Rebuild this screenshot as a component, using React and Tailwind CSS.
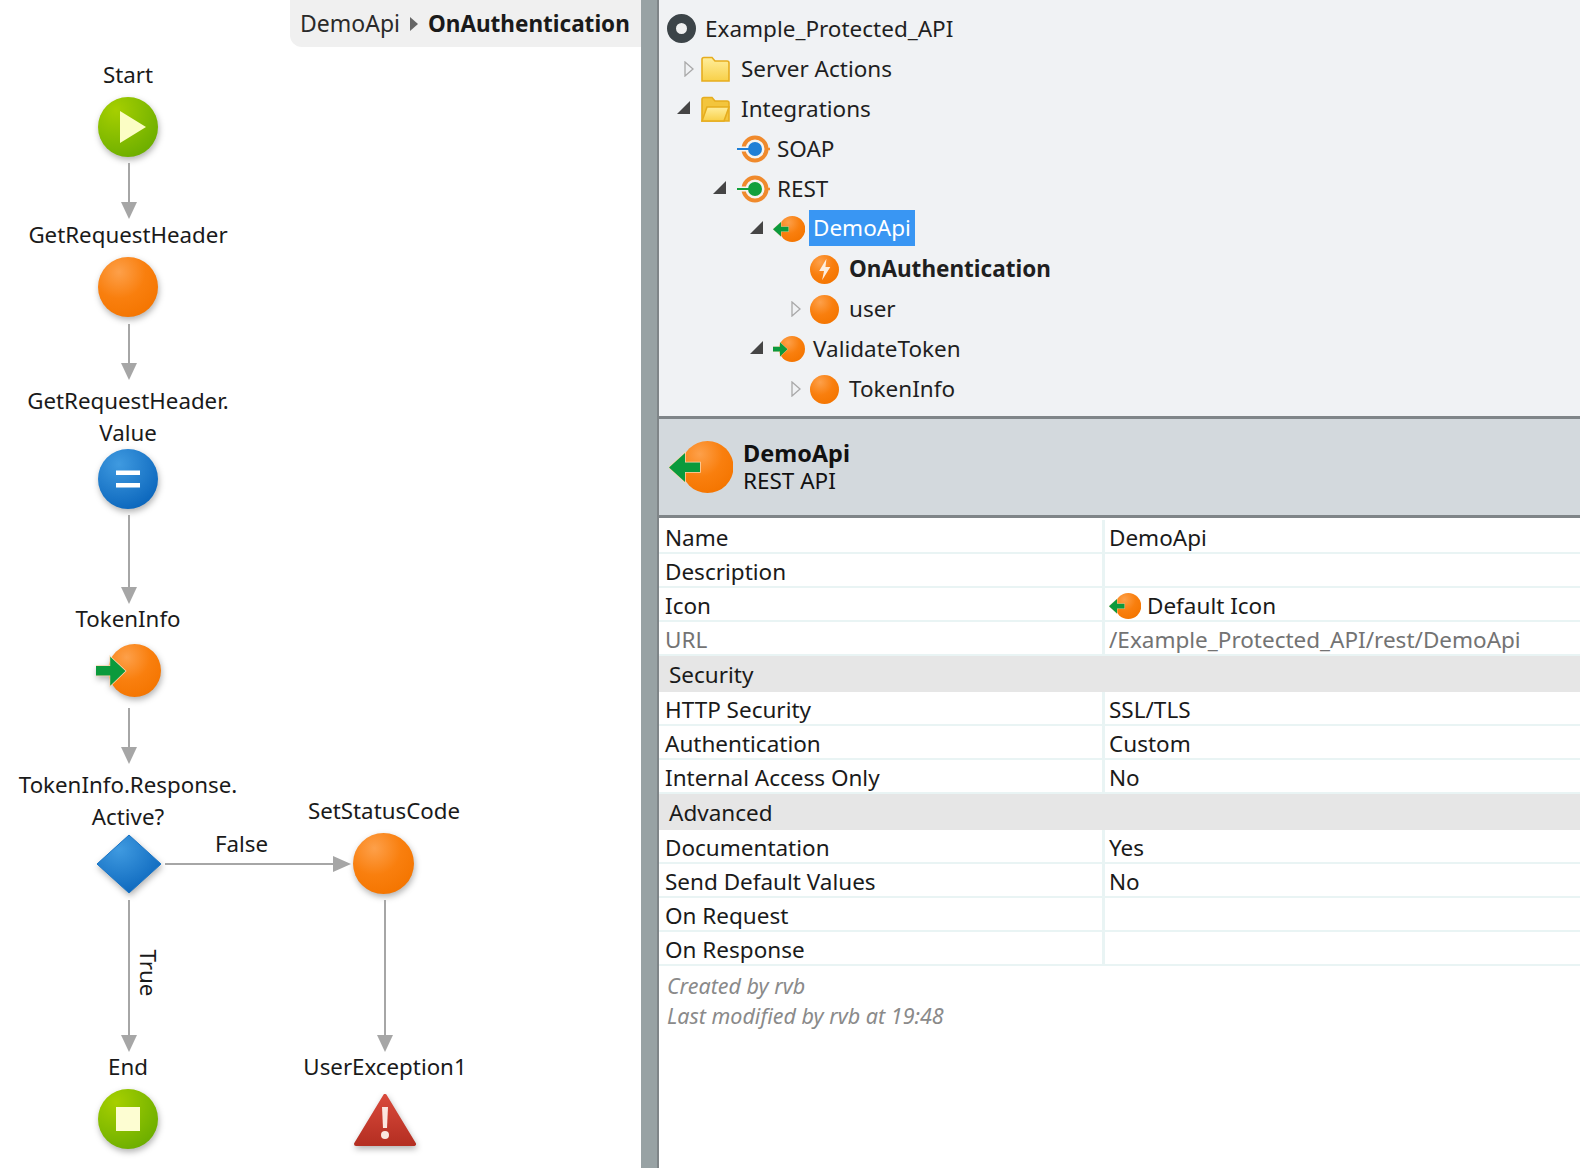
const font = "font-['Noto_Sans','Open_Sans',sans-serif]";

function Gradients() {
  return (
    <svg className="absolute h-0 w-0">
      <defs>
        <radialGradient id="orange" cx="35%" cy="25%" r="80%">
          <stop offset="0%" stopColor="#fda04a" />
          <stop offset="55%" stopColor="#f97f0e" />
          <stop offset="100%" stopColor="#f47500" />
        </radialGradient>
        <radialGradient id="green" cx="30%" cy="22%" r="85%">
          <stop offset="0%" stopColor="#a6cf00" />
          <stop offset="100%" stopColor="#6cae00" />
        </radialGradient>
        <radialGradient id="blue" cx="35%" cy="25%" r="85%">
          <stop offset="0%" stopColor="#3f9ae0" />
          <stop offset="100%" stopColor="#0863ba" />
        </radialGradient>
        <linearGradient id="folder" x1="0" y1="0" x2="0" y2="1">
          <stop offset="0%" stopColor="#ffee9c" />
          <stop offset="100%" stopColor="#f8d048" />
        </linearGradient>
        <linearGradient id="warn" x1="0" y1="0" x2="0" y2="1">
          <stop offset="0%" stopColor="#d8493a" />
          <stop offset="100%" stopColor="#b52f22" />
        </linearGradient>
      </defs>
    </svg>
  );
}

const shadow = "drop-shadow-[1px_3px_3px_rgba(0,0,0,0.3)]";

function Ball({ size = 60, className = "", children }) {
  return (
    <svg width={size} height={size} viewBox="0 0 60 60" className={className}>
      <circle cx="30" cy="30" r="30" fill="url(#orange)" />
      {children}
    </svg>
  );
}

function ApiIcon({ dir, width, height, className = "" }) {
  return (
    <svg width={width} height={height} viewBox="0 0 64 52" className={className}>
      <circle cx={dir === "in" ? 38 : 38.5} cy="26" r="26" fill="url(#orange)" />
      {dir === "in" ? (
        <path
          d="M0 21.5H14V12.5L29 26.5L14 41V31H0Z"
          fill="#0b9a3c"
          stroke="#fbd7b0"
          strokeWidth="1.5"
          paintOrder="stroke"
        />
      ) : (
        <path
          d="M0 26.5L16 12V21.5H31V31H16V41Z"
          fill="#0b9a3c"
          stroke="#fbd7b0"
          strokeWidth="1.5"
          paintOrder="stroke"
        />
      )}
    </svg>
  );
}

function ServiceIcon({ color }) {
  return (
    <svg width="33" height="28" viewBox="0 0 33 28">
      <circle cx="18" cy="14" r="11.5" fill="#f4f4f2" stroke="#f08a2c" strokeWidth="4" />
      <path d="M31 14H33" stroke="#f08a2c" strokeWidth="2.5" />
      <rect x="0" y="11.5" width="12" height="5" fill="#f4f4f2" />
      <path d="M0 14H12" stroke={color} strokeWidth="2" />
      <circle cx="18" cy="14" r="7" fill={color} />
    </svg>
  );
}

function Folder({ open }) {
  return (
    <svg width="29" height="27" viewBox="0 0 29 27">
      <path
        d="M1 25V3.5Q1 1.5 3 1.5H11L14 5H26Q28 5 28 7V25Z"
        fill={open ? "#f3c53d" : "url(#folder)"}
        stroke="#e6ad1e"
        strokeWidth="1.6"
      />
      {open && (
        <path
          d="M1 25L6 11H28L23 25Z"
          fill="url(#folder)"
          stroke="#e6ad1e"
          strokeWidth="1.6"
        />
      )}
    </svg>
  );
}

function Expander({ open }) {
  return open ? (
    <svg width="13" height="13" viewBox="0 0 13 13" className="mb-[4px]">
      <path d="M13 0V13H0Z" fill="#454545" />
    </svg>
  ) : (
    <svg width="10" height="16" viewBox="0 0 10 16">
      <path d="M1 1L9 8L1 15Z" fill="#f0f2f4" stroke="#a9a9a9" strokeWidth="1.3" />
    </svg>
  );
}

function DownArrow({ height, className }) {
  return (
    <svg width="18" height={height} className={`absolute ${className}`}>
      <path d={`M9 0V${height - 14}`} stroke="#a6a6a6" strokeWidth="2" />
      <path d={`M1 ${height - 17}H17L9 ${height}Z`} fill="#a6a6a6" />
    </svg>
  );
}

function FlowLabel({ children, className }) {
  return (
    <div className={`absolute w-[270px] text-center text-[22.3px] leading-8 text-[#1a1a1a] ${className}`}>
      {children}
    </div>
  );
}

function Flow() {
  return (
    <div className="relative h-full w-[641px] shrink-0 bg-white">
      <div className="absolute right-0 top-0 flex h-[47px] w-[351px] items-center rounded-bl-xl bg-[#f0f0f0] pl-[10px]">
        <span className="text-[23px] text-[#2a2a2a]">DemoApi</span>
        <svg width="8" height="14" viewBox="0 0 8 14" className="ml-[10px] mr-[10px]">
          <path d="M0 0L8 7L0 14Z" fill="#666" />
        </svg>
        <span className="text-[22.5px] font-bold text-[#1a1a1a]">OnAuthentication</span>
      </div>

      <FlowLabel className="left-[-7px] top-[59px]">Start</FlowLabel>
      <svg width="60" height="60" viewBox="0 0 60 60" className={`absolute left-[98px] top-[97px] ${shadow}`}>
        <circle cx="30" cy="30" r="30" fill="url(#green)" />
        <path d="M22 14L48 30L22 46Z" fill="#fbfdc4" />
      </svg>
      <DownArrow height={56} className="left-[120px] top-[163px]" />

      <FlowLabel className="left-[-7px] top-[219px]">GetRequestHeader</FlowLabel>
      <Ball className={`absolute left-[98px] top-[257px] ${shadow}`} />
      <DownArrow height={56} className="left-[120px] top-[324px]" />

      <FlowLabel className="left-[-7px] top-[385px]">
        GetRequestHeader.
        <br />
        Value
      </FlowLabel>
      <svg width="60" height="60" viewBox="0 0 60 60" className={`absolute left-[98px] top-[449px] ${shadow}`}>
        <circle cx="30" cy="30" r="30" fill="url(#blue)" />
        <path d="M18 21.5H42V26H18ZM18 34H42V38.5H18Z" fill="#fff" />
      </svg>
      <DownArrow height={89} className="left-[120px] top-[515px]" />

      <FlowLabel className="left-[-7px] top-[603px]">TokenInfo</FlowLabel>
      <ApiIcon dir="in" width={65} height={53} className={`absolute left-[96px] top-[644px] ${shadow}`} />
      <DownArrow height={56} className="left-[120px] top-[708px]" />

      <FlowLabel className="left-[-7px] top-[769px]">
        TokenInfo.Response.
        <br />
        Active?
      </FlowLabel>
      <svg width="66" height="60" viewBox="0 0 66 60" className={`absolute left-[96px] top-[834px] ${shadow}`}>
        <path d="M33 1L65 30L33 59L1 30Z" fill="url(#blue)" stroke="#1673c6" strokeLinejoin="round" />
      </svg>

      <div className="absolute left-[215px] top-[828px] text-[22.3px] leading-8 text-[#1a1a1a]">False</div>
      <svg width="186" height="18" className="absolute left-[165px] top-[855px]">
        <path d="M0 9H170" stroke="#a6a6a6" strokeWidth="2" />
        <path d="M168 1V17L186 9Z" fill="#a6a6a6" />
      </svg>

      <FlowLabel className="left-[249px] top-[795px]">SetStatusCode</FlowLabel>
      <Ball size={61} className={`absolute left-[353px] top-[833px] ${shadow}`} />

      <DownArrow height={152} className="left-[120px] top-[900px]" />
      <DownArrow height={152} className="left-[376px] top-[900px]" />
      <div className="absolute left-[123px] top-[957px] w-[50px] rotate-90 text-center text-[22.3px] leading-8 text-[#1a1a1a]">
        True
      </div>

      <FlowLabel className="left-[-7px] top-[1051px]">End</FlowLabel>
      <svg width="60" height="60" viewBox="0 0 60 60" className={`absolute left-[98px] top-[1089px] ${shadow}`}>
        <circle cx="30" cy="30" r="30" fill="url(#green)" />
        <path d="M18 18H42V42H18Z" fill="#fdfdd2" />
      </svg>

      <FlowLabel className="left-[250px] top-[1051px]">UserException1</FlowLabel>
      <svg width="62" height="54" viewBox="0 0 62 54" className={`absolute left-[354px] top-[1093px] ${shadow}`}>
        <path d="M31 3L60 51H2Z" fill="url(#warn)" stroke="url(#warn)" strokeWidth="4" strokeLinejoin="round" />
        <path d="M28 14H34L33 35H29Z" fill="#fbe6df" />
        <circle cx="31" cy="42" r="4" fill="#fbe6df" />
      </svg>
    </div>
  );
}

function TreeRow({ indent, slot, arrow, children }) {
  return (
    <div className={`flex h-10 items-center ${indent}`}>
      {slot && <div className={`flex items-center ${slot}`}>{arrow}</div>}
      {children}
    </div>
  );
}

function Tree() {
  return (
    <div className="h-[416px] bg-[#f0f2f4] pt-[9px] text-[22.5px] text-[#1f1f1f]">
      <TreeRow indent="pl-[8px]">
        <svg width="29" height="29" viewBox="0 0 29 29" className="mb-[2px]">
          <circle cx="14.5" cy="14.5" r="10" fill="#f0f0f0" stroke="#3c4448" strokeWidth="9" />
        </svg>
        <span className="ml-[9px]">Example_Protected_API</span>
      </TreeRow>
      <TreeRow indent="pl-[25px]" slot="w-[17px]" arrow={<Expander />}>
        <Folder />
        <span className="ml-[11px]">Server Actions</span>
      </TreeRow>
      <TreeRow indent="pl-[18px]" slot="w-[24px]" arrow={<Expander open />}>
        <Folder open />
        <span className="ml-[11px]">Integrations</span>
      </TreeRow>
      <TreeRow indent="pl-[78px]">
        <ServiceIcon color="#1f7fd6" />
        <span className="ml-[7px]">SOAP</span>
      </TreeRow>
      <TreeRow indent="pl-[54px]" slot="w-[24px]" arrow={<Expander open />}>
        <ServiceIcon color="#11a03c" />
        <span className="ml-[7px]">REST</span>
      </TreeRow>
      <TreeRow indent="pl-[91px]" slot="w-[23px]" arrow={<Expander open />}>
        <ApiIcon dir="out" width={32} height={26} />
        <span className="mb-[3px] ml-[4px] flex h-9 items-center bg-[#3996f3] px-[4px] text-white">DemoApi</span>
      </TreeRow>
      <TreeRow indent="pl-[151px]">
        <Ball size={29}>
          <path d="M34 8L19 33H29L25 52L42 25H32Z" fill="#fdeede" />
        </Ball>
        <span className="ml-[10px] font-bold">OnAuthentication</span>
      </TreeRow>
      <TreeRow indent="pl-[132px]" slot="w-[19px]" arrow={<Expander />}>
        <Ball size={29} />
        <span className="ml-[10px]">user</span>
      </TreeRow>
      <TreeRow indent="pl-[91px]" slot="w-[23px]" arrow={<Expander open />}>
        <ApiIcon dir="in" width={32} height={26} />
        <span className="ml-[8px]">ValidateToken</span>
      </TreeRow>
      <TreeRow indent="pl-[132px]" slot="w-[19px]" arrow={<Expander />}>
        <Ball size={29} />
        <span className="ml-[10px]">TokenInfo</span>
      </TreeRow>
    </div>
  );
}

function Prop({ label, muted, children }) {
  return (
    <div className={`grid h-[34px] grid-cols-[443px_1fr] border-b-2 border-[#e9f4f4] text-[22.5px] leading-8 ${muted ? "text-[#737373]" : "text-[#1a1a1a]"}`}>
      <div className="pl-[6px] pt-[2px]">{label}</div>
      <div className="flex items-center gap-[6px] border-l-[3px] border-[#e9f4f4] pl-[4px] pt-[2px]">{children}</div>
    </div>
  );
}

function Section({ children }) {
  return (
    <div className="flex h-9 items-center bg-[#e6e6e6] pl-[10px] pt-[2px] text-[22.5px] text-[#1a1a1a]">
      {children}
    </div>
  );
}

function Properties() {
  return (
    <div className="flex-1 bg-white">
      <div className="flex h-[102px] items-center gap-[10px] border-y-[3px] border-[#7f8588] bg-[#d3d9dd] pl-[10px] text-[#111]">
        <ApiIcon dir="out" width={64} height={52} />
        <div className="text-[22.5px] leading-7">
          <div className="text-[23.5px] font-bold">DemoApi</div>
          <div>REST API</div>
        </div>
      </div>
      <div className="pt-[2px]">
        <Prop label="Name">DemoApi</Prop>
        <Prop label="Description" />
        <Prop label="Icon">
          <ApiIcon dir="out" width={32} height={26} />
          Default Icon
        </Prop>
        <Prop label="URL" muted>
          /Example_Protected_API/rest/DemoApi
        </Prop>
        <Section>Security</Section>
        <Prop label="HTTP Security">SSL/TLS</Prop>
        <Prop label="Authentication">Custom</Prop>
        <Prop label="Internal Access Only">No</Prop>
        <Section>Advanced</Section>
        <Prop label="Documentation">Yes</Prop>
        <Prop label="Send Default Values">No</Prop>
        <Prop label="On Request" />
        <Prop label="On Response" />
      </div>
      <div className="pl-[8px] pt-[5px] text-[21.5px] italic leading-[30px] text-[#8a8a8a]">
        <div>Created by rvb</div>
        <div>Last modified by rvb at 19:48</div>
      </div>
    </div>
  );
}

export default function App() {
  return (
    <div className={`flex h-[1168px] w-[1580px] overflow-hidden bg-white ${font}`}>
      <Gradients />
      <Flow />
      <div className="w-[18px] shrink-0 border-r-2 border-[#7f8588] bg-[#98a2a4]" />
      <div className="flex min-w-0 flex-1 flex-col">
        <Tree />
        <Properties />
      </div>
    </div>
  );
}
